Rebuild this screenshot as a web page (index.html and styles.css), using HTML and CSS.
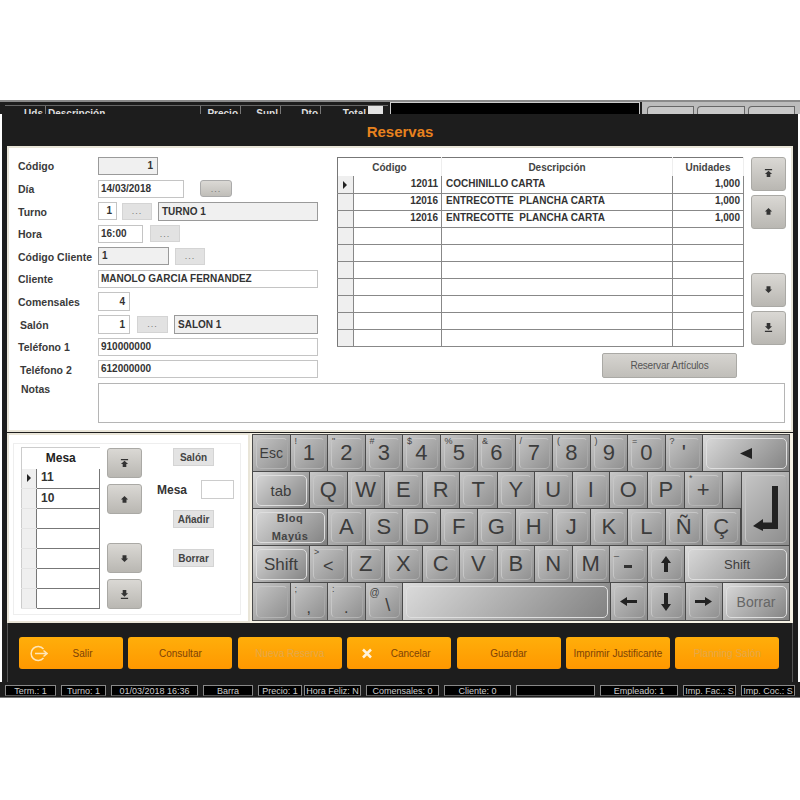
FILE: index.html
```html
<!DOCTYPE html>
<html lang="es">
<head>
    <meta charset="UTF-8">
    <title>Reservas</title>
    <link rel="stylesheet" href="styles.css">
</head>
<body>
    <svg class="icon-defs" width="0" height="0">
        <symbol id="i-first" viewBox="0 0 10 10"><path d="M1 0h8v1.500H1zM5 2l4 3.500H7V9H3V5.500H1z"/></symbol>
        <symbol id="i-up" viewBox="0 0 10 10"><path d="M5 1l4 4H7.200v3.500H2.800V5H1z"/></symbol>
        <symbol id="i-down" viewBox="0 0 10 10"><path d="M2.800 1.500h4.400V5H9L5 9 1 5h1.800z"/></symbol>
        <symbol id="i-last" viewBox="0 0 10 10"><path d="M3 0h4v3.500h2L5 7.500 1 3.500h2zM1 8.500h8V10H1z"/></symbol>
    </svg>

    <div class="app">
        <!-- ventana de detras -->
        <div class="back-strip">
            <div class="back-list">
                <span class="back-col col-uds">Uds</span>
                <span class="back-col col-desc">Descripción</span>
                <span class="back-col col-num">Precio</span>
                <span class="back-col col-num">Supl</span>
                <span class="back-col col-num">Dto</span>
                <span class="back-col col-total">Total</span>
                <span class="back-scroll"></span>
            </div>
            <div class="back-screen"></div>
            <div class="back-tools">
                <span class="back-tool"></span>
                <span class="back-tool"></span>
                <span class="back-tool"></span>
            </div>
        </div>

        <div class="modal">
            <h1 class="title">Reservas</h1>

            <div class="top-panel">
                <div class="top-main">
                    <div class="fields">
                        <div class="row"><label>Código</label><span class="field locked num w60">1</span></div>
                        <div class="row"><label>Día</label><span class="field w86">14/03/2018</span><button class="dots dots-raised">...</button></div>
                        <div class="row"><label>Turno</label><span class="field num w19">1</span><button class="dots gap5 w30">...</button><span class="field locked gap6 w160 tall">TURNO 1</span></div>
                        <div class="row"><label>Hora</label><span class="field w45">16:00</span><button class="dots gap7 w30">...</button></div>
                        <div class="row"><label>Código Cliente</label><span class="field locked w71">1</span><button class="dots gap6 w30">...</button></div>
                        <div class="row"><label>Cliente</label><span class="field w220">MANOLO GARCIA FERNANDEZ</span></div>
                        <div class="row"><label>Comensales</label><span class="field num w32 tall">4</span></div>
                        <div class="row"><label class="ind">Salón</label><span class="field num w32 tall">1</span><button class="dots gap7 w31">...</button><span class="field locked gap6 w144 tall">SALON 1</span></div>
                        <div class="row"><label>Teléfono 1</label><span class="field w220">910000000</span></div>
                        <div class="row"><label class="ind">Teléfono 2</label><span class="field w220">612000000</span></div>
                    </div>

                    <div class="list-side">
                        <div class="list-row">
                            <table class="grid lines">
                                <colgroup><col class="c-ind"><col class="c-code"><col class="c-desc"><col class="c-units"></colgroup>
                                <thead><tr><th colspan="2">Código</th><th>Descripción</th><th>Unidades</th></tr></thead>
                                <tbody>
                                    <tr><td class="ind-cell"><i class="pointer"></i></td><td class="r">12011</td><td>COCHINILLO CARTA</td><td class="r">1,000</td></tr>
                                    <tr><td class="ind-cell"></td><td class="r">12016</td><td>ENTRECOTTE&nbsp; PLANCHA CARTA</td><td class="r">1,000</td></tr>
                                    <tr><td class="ind-cell"></td><td class="r">12016</td><td>ENTRECOTTE&nbsp; PLANCHA CARTA</td><td class="r">1,000</td></tr>
                                    <tr><td class="ind-cell"></td><td></td><td></td><td></td></tr>
                                    <tr><td class="ind-cell"></td><td></td><td></td><td></td></tr>
                                    <tr><td class="ind-cell"></td><td></td><td></td><td></td></tr>
                                    <tr><td class="ind-cell"></td><td></td><td></td><td></td></tr>
                                    <tr><td class="ind-cell"></td><td></td><td></td><td></td></tr>
                                    <tr><td class="ind-cell"></td><td></td><td></td><td></td></tr>
                                    <tr><td class="ind-cell"></td><td></td><td></td><td></td></tr>
                                </tbody>
                            </table>
                            <div class="nav nav-lines">
                                <button class="nav-btn"><svg><use href="#i-first"/></svg></button>
                                <button class="nav-btn"><svg><use href="#i-up"/></svg></button>
                                <button class="nav-btn push"><svg><use href="#i-down"/></svg></button>
                                <button class="nav-btn"><svg><use href="#i-last"/></svg></button>
                            </div>
                        </div>
                        <button class="reserve">Reservar Artículos</button>
                    </div>
                </div>

                <div class="notes-row">
                    <label>Notas</label>
                    <div class="notes"></div>
                </div>
            </div>

            <div class="lower">
                <div class="tables-panel">
                    <div class="tables-box">
                        <table class="grid mesas">
                            <colgroup><col class="m-ind"><col></colgroup>
                            <thead><tr><th colspan="2">Mesa</th></tr></thead>
                            <tbody>
                                <tr><td class="ind-cell"><i class="pointer"></i></td><td>11</td></tr>
                                <tr><td class="ind-cell"></td><td>10</td></tr>
                                <tr><td class="ind-cell"></td><td></td></tr>
                                <tr><td class="ind-cell"></td><td></td></tr>
                                <tr><td class="ind-cell"></td><td></td></tr>
                                <tr><td class="ind-cell"></td><td></td></tr>
                                <tr><td class="ind-cell"></td><td></td></tr>
                            </tbody>
                        </table>
                        <div class="nav nav-mesas">
                            <button class="nav-btn"><svg><use href="#i-first"/></svg></button>
                            <button class="nav-btn"><svg><use href="#i-up"/></svg></button>
                            <button class="nav-btn push"><svg><use href="#i-down"/></svg></button>
                            <button class="nav-btn"><svg><use href="#i-last"/></svg></button>
                        </div>
                        <div class="mesa-side">
                            <button class="small-btn">Salón</button>
                            <div class="mesa-input"><span>Mesa</span><i class="mesa-box"></i></div>
                            <button class="small-btn">Añadir</button>
                            <button class="small-btn borrar">Borrar</button>
                        </div>
                    </div>
                </div>

                <div class="keyboard">
                    <div class="kb-row">
                        <button class="key txt-14">Esc</button>
                        <button class="key"><span class="alt">!</span>1</button>
                        <button class="key"><span class="alt">"</span>2</button>
                        <button class="key"><span class="alt">#</span>3</button>
                        <button class="key"><span class="alt">$</span>4</button>
                        <button class="key"><span class="alt">%</span>5</button>
                        <button class="key"><span class="alt">&amp;</span>6</button>
                        <button class="key"><span class="alt">/</span>7</button>
                        <button class="key"><span class="alt">(</span>8</button>
                        <button class="key"><span class="alt">)</span>9</button>
                        <button class="key"><span class="alt">=</span>0</button>
                        <button class="key"><span class="alt">?</span>'</button>
                        <button class="key grow light">
                            <svg width="12" height="11" viewBox="0 0 12 11"><path class="glyph" d="M0 5.500L12 0v11z"/></svg>
                        </button>
                    </div>
                    <div class="kb-middle">
                        <div class="kb-rows">
                            <div class="kb-row">
                                <button class="key w-tab light txt-15">tab</button>
                                <button class="key">Q</button>
                                <button class="key">W</button>
                                <button class="key">E</button>
                                <button class="key">R</button>
                                <button class="key">T</button>
                                <button class="key">Y</button>
                                <button class="key">U</button>
                                <button class="key">I</button>
                                <button class="key">O</button>
                                <button class="key">P</button>
                                <button class="key"><span class="alt">*</span>+</button>
                                <button class="key grow plain"></button>
                            </div>
                            <div class="kb-row">
                                <button class="key w-bloq light bloq">Bloq<br>Mayús</button>
                                <button class="key">A</button>
                                <button class="key">S</button>
                                <button class="key">D</button>
                                <button class="key">F</button>
                                <button class="key">G</button>
                                <button class="key">H</button>
                                <button class="key">J</button>
                                <button class="key">K</button>
                                <button class="key">L</button>
                                <button class="key">Ñ</button>
                                <button class="key">Ç</button>
                            </div>
                        </div>
                        <button class="key enter">
                            <svg width="25" height="45" viewBox="0 0 25 45"><path class="glyph" d="M19 0h6v43H10v2L0 40l10-7v3.600h9z"/></svg>
                        </button>
                    </div>
                    <div class="kb-row">
                        <button class="key w-tab light txt-17">Shift</button>
                        <button class="key key-small"><span class="alt">&gt;</span>&lt;</button>
                        <button class="key">Z</button>
                        <button class="key">X</button>
                        <button class="key">C</button>
                        <button class="key">V</button>
                        <button class="key">B</button>
                        <button class="key">N</button>
                        <button class="key">M</button>
                        <button class="key"><span class="alt">_</span><i class="dash"></i></button>
                        <button class="key">
                            <svg width="10" height="16" viewBox="0 0 10 16"><path class="glyph" d="M5 0l5 7H7v9H3V7H0z"/></svg>
                        </button>
                        <button class="key grow light txt-13">Shift</button>
                    </div>
                    <div class="kb-row kb-last">
                        <button class="key"></button>
                        <button class="key key-low"><span class="alt">;</span>,</button>
                        <button class="key key-low"><span class="alt">:</span>.</button>
                        <button class="key"><span class="alt at">@</span><span class="slash">\</span></button>
                        <button class="key grow light"></button>
                        <button class="key">
                            <svg width="17" height="9" viewBox="0 0 17 9"><path class="glyph" d="M0 4.500L7 0v3h10v3H7v3z"/></svg>
                        </button>
                        <button class="key">
                            <svg width="10" height="18" viewBox="0 0 10 18"><path class="glyph" d="M3 0h4v11h3l-5 7-5-7h3z"/></svg>
                        </button>
                        <button class="key">
                            <svg width="17" height="9" viewBox="0 0 17 9"><path class="glyph" d="M17 4.500L10 0v3H0v3h10v3z"/></svg>
                        </button>
                        <button class="key w-borrar light txt-14 faint">Borrar</button>
                    </div>
                </div>
            </div>

            <div class="actions">
                <button class="action has-icon">
                    <svg class="action-icon" width="18" height="17" viewBox="0 0 18 17"><path class="salir-ring" d="M13.500 4A7 7 0 1 0 13.500 13"/><path class="salir-arrow" d="M5 8.500h12M13.500 5.500l3.500 3-3.500 3"/></svg>
                    <span>Salir</span>
                </button>
                <button class="action">Consultar</button>
                <button class="action off">Nueva Reserva</button>
                <button class="action has-icon">
                    <svg class="action-icon" width="18" height="11" viewBox="0 0 18 11"><path class="cancel-x" d="M5 1.500l8 8M13 1.500l-8 8"/></svg>
                    <span>Cancelar</span>
                </button>
                <button class="action">Guardar</button>
                <button class="action">Imprimir Justificante</button>
                <button class="action off">Planning Salón</button>
            </div>
        </div>

        <div class="status">
            <span>Term.: 1</span>
            <span>Turno: 1</span>
            <span>01/03/2018 16:36</span>
            <span>Barra</span>
            <span class="st-precio">Precio: 1</span>
            <span>Hora Feliz: N</span>
            <span>Comensales: 0</span>
            <span>Cliente: 0</span>
            <span></span>
            <span>Empleado: 1</span>
            <span>Imp. Fac.: S</span>
            <span>Imp. Coc.: S</span>
        </div>
    </div>
</body>
</html>
```

FILE: styles.css
```css
* {
    box-sizing: border-box;
}
body {
    margin: 0;
    background: white;
    font-family: "Liberation Sans", Arial, sans-serif;
    color: #333;
}
button {
    font-family: inherit;
    padding: 0;
    cursor: pointer;
}
.icon-defs {
    position: absolute;
}
.app {
    width: 800px;
    margin-top: 100px;
}

/* back window */
.back-strip {
    display: flex;
    height: 14px;
    overflow: hidden;
    background: #1d1d1d;
    border-top: 2px solid #8a8a8a;
    padding-left: 2px;
}
.back-list {
    display: flex;
    width: 383px;
    margin-top: 3px;
    border-top: 1px solid #666;
    margin-left: 3px;
    font-size: 10px;
    font-weight: bold;
    color: #ddd;
}
.back-col {
    padding-top: 2px;
    border-left: 1px solid #777;
    text-align: right;
    padding-right: 2px;
}
.col-uds { width: 40px; border-left: 0; }
.col-desc { width: 155px; text-align: left; padding-left: 2px; }
.col-num { width: 40px; }
.col-total { width: 48px; }
.back-scroll {
    width: 15px;
    background: #e4e4e4;
}
.back-screen {
    width: 250px;
    margin-left: 2px;
    background: black;
    border: 1px solid #ccc;
    border-bottom: 0;
}
.back-tools {
    flex: 1;
    display: flex;
    gap: 3px;
    margin-left: 2px;
    padding: 4px 5px 0;
    background: #bcbcbc;
}
.back-tool {
    flex: 1;
    background: #c8c8c8;
    border: 1px solid #666;
    border-radius: 4px 0 0 0;
    border-bottom: 0;
}

/* modal */
.modal {
    height: 568px;
    margin: 0 2px;
    background: #1d1d1d;
}
.title {
    margin: 0;
    height: 32px;
    line-height: 36px;
    text-align: center;
    font-size: 15px;
    font-weight: bold;
    color: #e8821e;
}
.top-panel {
    height: 286px;
    margin: 0 5px;
    padding: 6.700px 6px 0 9px;
    background: white;
    border: 2px solid #e9e5d8;
}
.top-main {
    display: flex;
}
.fields {
    width: 300px;
}
.row {
    display: flex;
    align-items: center;
    height: 22.600px;
}
.row label,
.notes-row label {
    width: 80px;
    flex: none;
    padding-top: 1px;
    font-size: 10.500px;
    font-weight: bold;
    color: #3a3a3a;
    white-space: nowrap;
}
.row label.ind {
    padding-left: 2px;
}
.field {
    height: 18px;
    line-height: 15px;
    padding: 0 2px;
    font-size: 10px;
    font-weight: bold;
    color: #333;
    background: white;
    border: 1px solid #c4c4c4;
    white-space: nowrap;
}
.field.tall { height: 19px; line-height: 17px; }
.field.num { text-align: right; padding-right: 4px; }
.field.locked {
    background: #f0f0f0;
    border-color: #9a9a9a;
}
.field.locked:not(.num) { padding-left: 3px; }
.w19 { width: 19px; }
.w32 { width: 32px; }
.w45 { width: 45px; }
.w60 { width: 60px; }
.w71 { width: 71px; }
.w86 { width: 86px; }
.w144 { width: 144px; }
.w160 { width: 160px; }
.w220 { width: 220px; }
.w30 { width: 30px; }
.w31 { width: 31px; }
.gap5 { margin-left: 5px; }
.gap6 { margin-left: 6px; }
.gap7 { margin-left: 7px; }
.dots {
    height: 17px;
    background: #e2e2e2;
    border: 1px solid #d4d4d4;
    color: #777;
    font-size: 9px;
    letter-spacing: 1px;
    line-height: 12px;
}
.dots-raised {
    width: 32px;
    margin-left: 16px;
    background: linear-gradient(#dbd9d5, #c0beb9);
    border: 1px solid #aaa;
    border-radius: 3px;
}

/* article list */
.list-side {
    width: 449px;
    margin-left: 19px;
    padding-top: 2.300px;
}
.list-row {
    display: flex;
}
.grid {
    border-collapse: collapse;
    table-layout: fixed;
    font-size: 10px;
    font-weight: bold;
    color: #333;
}
.grid.lines {
    width: 407px;
    height: 190px;
    border: 1px solid #777;
}
.c-ind { width: 16px; }
.c-code { width: 88px; }
.c-units { width: 71px; }
.grid.lines th {
    height: 19px;
    padding: 0;
    color: #444;
    border-right: 1px solid #eee;
}
.grid.lines td {
    height: 17px;
    padding: 0 4px 2px;
    border: 1px solid #888;
    border-width: 0 1px 1px 0;
    white-space: nowrap;
    overflow: hidden;
}
.grid.lines td.r {
    text-align: right;
    padding-right: 3px;
}
.grid td.ind-cell {
    padding: 0 0 0 5px;
    background: #efefef;
}
.pointer {
    display: block;
    width: 0;
    height: 0;
    border-left: 4px solid #222;
    border-top: 4px solid transparent;
    border-bottom: 4px solid transparent;
}
.nav {
    display: flex;
    flex-direction: column;
    width: 35px;
    flex: none;
}
.nav-lines {
    height: 188px;
    margin-left: 7px;
    gap: 4px;
}
.nav-lines .nav-btn { height: 34px; }
.nav-btn {
    display: flex;
    align-items: center;
    justify-content: center;
    background: linear-gradient(#dad8d4, #b9b7b2);
    border: 1px solid #aaa9a5;
    border-radius: 3px;
}
.nav-btn svg {
    width: 9px;
    height: 9px;
    fill: #333;
}
.nav-btn.push {
    margin-top: auto;
}
.reserve {
    display: block;
    width: 135px;
    height: 25px;
    margin: 6px 0 0 265px;
    background: linear-gradient(#d6d4d0, #c0beb9);
    border: 1px solid #aaa9a5;
    border-radius: 2px;
    font-size: 10px;
    letter-spacing: -0.200px;
    color: #555;
}
.notes-row {
    display: flex;
    margin-top: 2px;
}
.notes-row label {
    padding: 0 0 0 3px;
}
.notes {
    width: 688px;
    height: 40px;
    background: white;
    border: 1px solid #b5b5b5;
}

/* lower area */
.lower {
    display: flex;
    height: 190px;
    margin: 1px 5px 0;
    background: #f6f2e5;
}
.tables-panel {
    width: 243px;
    flex: none;
    padding: 8px 7px 7px 4px;
    background: white;
    border: 2px solid #e9e5d8;
}
.tables-box {
    display: flex;
    height: 172px;
    padding: 3px 0 0 7px;
    border: 1px solid #eee;
}
.grid.mesas {
    width: 79px;
    height: 162px;
    font-size: 12px;
    border-top: 1px solid #ccc;
    border-left: 1px solid #ccc;
}
.m-ind { width: 15px; }
.grid.mesas th {
    height: 21px;
    padding: 0;
    color: #222;
}
.grid.mesas td {
    height: 19.500px;
    padding: 0 4px 2px;
    border-bottom: 1px solid #777;
    border-right: 1px solid #777;
}
.grid.mesas td.ind-cell {
    padding: 0 0 0 5px;
    border-bottom: 1px solid #e4e4e4;
}
.nav-mesas {
    height: 161px;
    margin: 1px 0 0 7px;
    gap: 6px;
}
.nav-mesas .nav-btn { height: 30px; }
.mesa-side {
    width: 80px;
    margin-left: 13px;
    padding-top: 1px;
    font-size: 12px;
    font-weight: bold;
}
.small-btn {
    display: block;
    width: 41px;
    height: 18px;
    margin-left: 18px;
    background: #e3e3e3;
    border: 1px solid #d4d4d4;
    font-size: 10px;
    font-weight: bold;
    color: #444;
}
.mesa-input {
    display: flex;
    align-items: center;
    justify-content: space-between;
    height: 19px;
    margin: 14px 0 11px 2px;
    color: #333;
}
.mesa-box {
    width: 33px;
    height: 19px;
    margin-right: 1px;
    background: white;
    border: 1px solid #ccc;
}
.small-btn.borrar {
    margin-top: 21px;
}

/* on-screen keyboard */
.keyboard {
    flex: 1;
    display: flex;
    flex-direction: column;
    gap: 1px;
    height: 187px;
    margin: 1px 3px 0 2px;
    padding: 1px;
    background: #4a4a4a;
}
.kb-row {
    display: flex;
    gap: 1px;
    height: 36px;
}
.kb-row.kb-last {
    height: 37px;
}
.kb-middle {
    display: flex;
    gap: 1px;
    height: 73px;
}
.kb-rows {
    flex: 1;
    display: flex;
    flex-direction: column;
    gap: 1px;
}
.key {
    position: relative;
    display: flex;
    align-items: center;
    justify-content: center;
    width: 36.500px;
    flex: none;
    background: linear-gradient(135deg, #c8c8c8, #8c8c8c);
    border: 0;
    font-size: 22px;
    line-height: 1;
    color: #3c3c3c;
}
.key::before {
    content: "";
    position: absolute;
    inset: 3px 2px 2px 3px;
    border: 1px solid #c6c6c6;
    border-right-color: #a8a8a8;
    border-bottom-color: #b4b4b4;
    border-radius: 5px;
}
.key.grow { flex: 1; width: auto; }
.key.plain::before { display: none; }
.key.light {
    background: linear-gradient(135deg, #dcdcdc, #808080);
}
.key.light::before {
    border: 1.500px solid #dedede;
}
.w-tab { width: 56px; }
.w-bloq { width: 74px; }
.w-borrar { width: 66px; }
.key.enter {
    width: 47px;
    height: 73px;
}
.txt-13 { font-size: 13px; }
.txt-14 { font-size: 14px; }
.txt-15 { font-size: 15px; }
.txt-17 { font-size: 17px; }
.faint { color: #666; }
.bloq {
    font-size: 11px;
    font-weight: bold;
    line-height: 18px;
    letter-spacing: 0.500px;
    color: #444;
}
.key-small { font-size: 18px; padding-top: 3px; }
.key-low { font-size: 16px; padding-top: 12px; }
.dash {
    width: 8px;
    height: 3px;
    margin-top: 4px;
    background: #333;
}
.slash {
    margin-top: 6px;
    margin-left: 8px;
    font-size: 18px;
}
.alt {
    position: absolute;
    top: 2px;
    left: 4px;
    font-size: 9px;
    color: #444;
}
.alt.at {
    top: 5px;
    font-size: 10px;
}
.glyph {
    fill: #222;
}

/* bottom buttons */
.actions {
    display: flex;
    gap: 5.400px;
    height: 60px;
    margin: 0 5px;
    padding: 14px 0 0 11px;
    border: 1px solid #555;
    border-top: 0;
}
.action {
    display: flex;
    align-items: center;
    justify-content: center;
    width: 104px;
    height: 32px;
    background: linear-gradient(#ffae0a, #ff9800);
    border: 0;
    border-radius: 3px;
    font-size: 10px;
    color: #7d4208;
}
.action.off {
    color: #e4a84a;
}
.action.has-icon {
    padding: 0 6px 0 11px;
}
.action.has-icon span {
    flex: 1;
}
.action-icon {
    flex: none;
}
.salir-ring,
.salir-arrow {
    fill: none;
    stroke: #ffe6b8;
    stroke-width: 1.500;
}
.cancel-x {
    fill: none;
    stroke: #fff3dc;
    stroke-width: 2.500;
}

/* status bar */
.status {
    display: grid;
    grid-template-columns: 51px 45px 87px 50px 41px 57px 73px 67px 79px 78px 53px 54px;
    gap: 5px;
    height: 16px;
    padding: 3px 5px 1px;
    background: #1d1d1d;
    border-bottom: 1px solid #777;
}
.status span {
    background: black;
    border: 1px solid #888;
    border-bottom-color: #555;
    font-size: 9px;
    line-height: 10px;
    text-align: center;
    color: #ccc;
    white-space: nowrap;
    overflow: hidden;
}
.status .st-precio {
    margin-right: -3px;
}
```
